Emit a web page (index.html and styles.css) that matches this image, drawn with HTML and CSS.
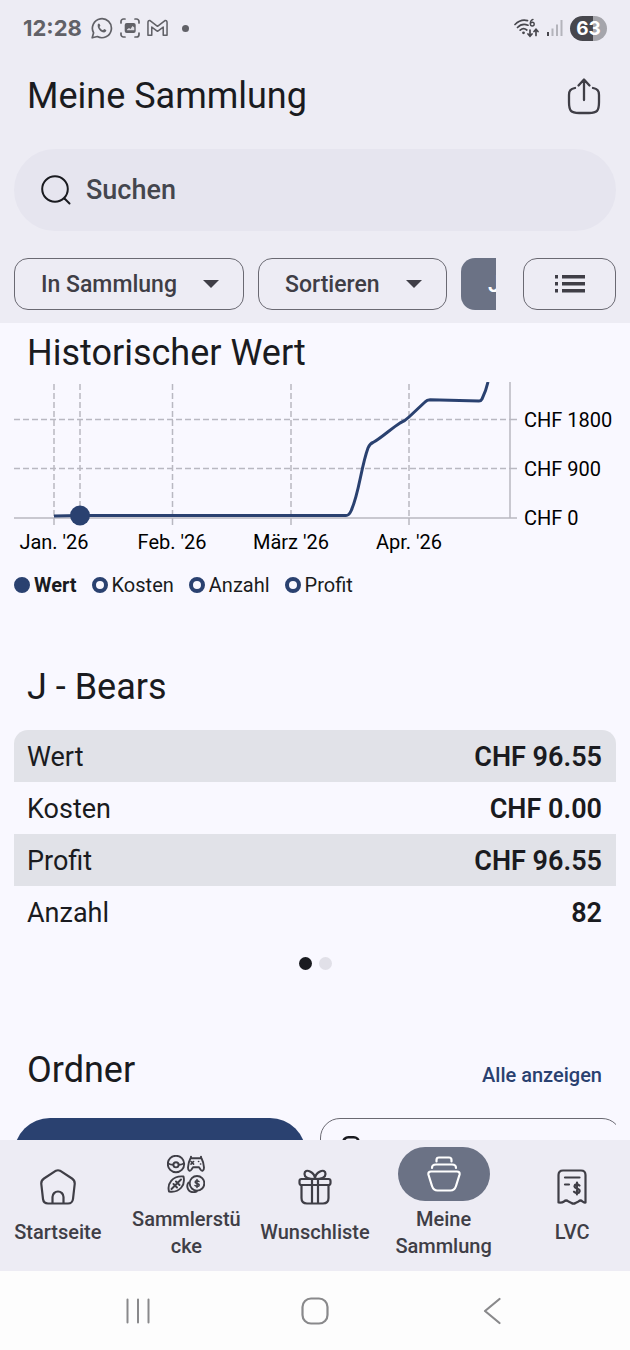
FILE: index.html
```html
<!DOCTYPE html>
<html lang="de">

<head>
    <meta charset="UTF-8">
    <meta name="viewport" content="width=device-width, initial-scale=1.0">
    <title>Meine Sammlung</title>
    <link rel="stylesheet" href="styles.css">
</head>

<body>
    <header class="top">
        <div class="status">
            <span class="time">12:28</span>
            <svg width="22" height="22" viewBox="0 0 22 22" fill="none" stroke="#616167" stroke-width="1.7">
                <path d="M1.2 20.8l1.4-5A9.5 9.5 0 1 1 6.3 19.5z" stroke-linejoin="round" />
                <path d="M6.8 7.2c.6-1 1.5-1 1.8-.3l.8 1.8-.9 1.2c.7 1.6 1.9 2.7 3.5 3.4l1.2-1.2 2 1c.4.9-.6 2.2-2 2.3-3.4.1-7.4-4.2-6.4-8.2z" fill="#616167" stroke="none" />
            </svg>
            <svg width="20" height="20" viewBox="0 0 20 20" fill="none" stroke="#616167" stroke-width="1.7" stroke-linecap="round">
                <path d="M1 5V3.500A2.500 2.500 0 0 1 3.500 1H5M15 1h1.500A2.500 2.500 0 0 1 19 3.500V5M19 15v1.500a2.500 2.500 0 0 1-2.500 2.500H15M5 19H3.500A2.500 2.500 0 0 1 1 16.500V15" />
                <rect x="4.700" y="5" width="11" height="10" rx="2" fill="#616167" stroke="none" />
                <path d="M7 12.300V11.500L9 10l1.500 1 2-3 1.800 1.500v2.800z" fill="#dddce3" stroke="none" />
            </svg>
            <svg width="21" height="18" viewBox="0 0 22 18" fill="none" stroke="#616167" stroke-width="1.6" stroke-linejoin="round">
                <path d="M1 16.500V3.200Q1 .8 3.200 1.200L11 7.200 18.800 1.200Q21 .8 21 3.200V16.500H17V8L11 12.500 5 8V16.500z" />
            </svg>
            <span class="more"></span>
            <svg class="wifi" width="26" height="20" viewBox="0 0 26 20" fill="none" stroke="#47474d" stroke-width="1.7" stroke-linecap="round">
                <path d="M2 6.500C6 2.500 10 1.300 14.500 2.600M4.500 9.500C7.500 6.300 11 5.600 15 7.200M7.200 12.200c2-1.800 4.600-1.800 6.600-.2" />
                <circle cx="10.500" cy="14.800" r="1.400" fill="#47474d" stroke="none" />
                <path d="M20 1.400c-2 .8-2.800 2.500-2.600 4.200" stroke-width="1.400" />
                <circle cx="19.300" cy="6.100" r="1.900" stroke-width="1.400" />
                <path d="M17 12v6M15 16l2 2.200 2-2.200M23 17.500v-6M21 13.500l2-2.200 2 2.200" />
            </svg>
            <svg width="17" height="18" viewBox="0 0 17 18" stroke="#b4b4bb" stroke-width="2">
                <path d="M2 17v-4" stroke="#47474d" />
                <path d="M6.500 17V9.500M11 17V5.500M15.500 17V1" />
            </svg>
            <span class="battery">63</span>
        </div>

        <div class="titlebar">
            <h1>Meine Sammlung</h1>
            <button class="share" aria-label="Teilen">
                <svg width="34" height="38" viewBox="0 0 34 38" fill="none" stroke="#3f3e46" stroke-width="2.3" stroke-linecap="round" stroke-linejoin="round">
                    <path d="M17 23V3M11.500 8.500L17 2.500l5.500 6M8 11C3.500 12 2 13.500 2 18v7c0 9 2 11 10 11h10c8 0 10-2 10-11v-7c0-4.500-1.500-6-6-7" />
                </svg>
            </button>
        </div>

        <label class="search">
            <svg width="30" height="30" viewBox="0 0 30 30" fill="none" stroke="#1a1b20" stroke-width="2" stroke-linecap="round">
                <circle cx="14" cy="14" r="12.800" />
                <path d="M23.500 23.500l5 5" />
            </svg>
            <input type="search" placeholder="Suchen" aria-label="Suchen">
        </label>

        <div class="filters">
            <div class="chips">
                <div class="chip wide">
                    <select aria-label="Status">
                        <option>In Sammlung</option>
                    </select>
                </div>
                <div class="chip">
                    <select aria-label="Sortierung">
                        <option>Sortieren</option>
                    </select>
                </div>
                <button class="chip-active">J - Bears</button>
            </div>
            <button class="list-btn" aria-label="Listenansicht">
                <svg width="30" height="18" viewBox="0 0 30 18" fill="#3f3e46">
                    <path d="M0 0h3v3.500H0zM7 0h23v3.500H7zM0 7h3v3.500H0zM7 7h23v3.500H7zM0 14h3v3.500H0zM7 14h23v3.500H7z" />
                </svg>
            </button>
        </div>
    </header>

    <main>
        <section class="history">
            <h2>Historischer Wert</h2>
            <svg class="chart" viewBox="0 0 602 176">
                <!-- grid -->
                <g stroke="#b9b8c1" stroke-width="1.5" stroke-dasharray="6 3">
                    <path d="M0 37.500H496M0 86.500H496M40 2V136M66 2V136M158.500 2V136M277 2V136M395 2V136" />
                </g>
                <!-- axes and ticks -->
                <path d="M0 136H503M496 0V136M496 37.500h7M496 86.500h7M40 136v7M158.500 136v7M277 136v7M395 136v7" stroke="#b9b8c1" stroke-width="1.5" />
                <path class="value" d="M40 134L66 133.500H332Q335 133.500 337 129C345 112 347 85 354 66Q356 61.500 359 60.500C366 57 378 46 386 41Q391 39 395 35L411 20Q413 17.800 416 17.800L465 19Q467 19 468 17Q472 9 474 0" />
                <circle cx="66" cy="133.500" r="10" fill="#2a4170" />
                <g text-anchor="middle">
                    <text x="40" y="167">Jan. '26</text>
                    <text x="158" y="167">Feb. '26</text>
                    <text x="277" y="167">März '26</text>
                    <text x="395" y="167">Apr. '26</text>
                </g>
                <text x="510" y="45">CHF 1800</text>
                <text x="510" y="94">CHF 900</text>
                <text x="510" y="143">CHF 0</text>
            </svg>
            <div class="legend">
                <label><input type="radio" name="series" checked><span>Wert</span></label>
                <label><input type="radio" name="series"><span>Kosten</span></label>
                <label><input type="radio" name="series"><span>Anzahl</span></label>
                <label><input type="radio" name="series"><span>Profit</span></label>
            </div>
        </section>

        <section class="summary">
            <h2>J - Bears</h2>
            <table>
                <tr><th scope="row">Wert</th><td>CHF 96.55</td></tr>
                <tr><th scope="row">Kosten</th><td>CHF 0.00</td></tr>
                <tr><th scope="row">Profit</th><td>CHF 96.55</td></tr>
                <tr><th scope="row">Anzahl</th><td>82</td></tr>
            </table>
            <div class="dots">
                <span class="current"></span>
                <span></span>
            </div>
        </section>

        <section class="folders">
            <div class="folders-head">
                <h2>Ordner</h2>
                <a href="#">Alle anzeigen</a>
            </div>
            <div class="cards">
                <div class="card filled"></div>
                <div class="card outlined">
                    <svg width="18" height="18" viewBox="0 0 18 18" fill="none" stroke="#1a1b20" stroke-width="2.6">
                        <rect x="1.300" y="1.300" width="15.400" height="15.400" rx="5" />
                    </svg>
                </div>
            </div>
        </section>
    </main>

    <nav class="tabs">
        <a href="#">
            <span class="icon">
                <svg width="36" height="36" viewBox="0 0 36 36" fill="none" stroke="#3f3e46" stroke-width="2.2" stroke-linejoin="round">
                    <path d="M16 1.700Q18 .8 20 1.700L32 9.500Q35 11.500 34.700 15L33 30Q32.400 34.500 28 34.500H8Q3.600 34.500 3 30L1.300 15Q1 11.500 4 9.500z" />
                    <path d="M12.500 34V28a5.500 5.500 0 0 1 11 0v6" />
                </svg>
            </span>
            <span>Startseite</span>
        </a>
        <a href="#">
            <span class="icon">
                <svg width="38" height="38" viewBox="0 0 38 38" fill="none" stroke="#3f3e46" stroke-width="1.9" stroke-linecap="round" stroke-linejoin="round">
                    <!-- ball -->
                    <circle cx="9" cy="9" r="8.200" />
                    <circle cx="9" cy="9.800" r="2.600" />
                    <path d="M1.200 8.500q2.500 1.300 5 1.300M16.800 8.500q-2.500 1.300-5 1.300" />
                    <!-- controller -->
                    <path d="M23.500 3.300h11Q36.500 7 37 12.500c0 3.800-2 4-3.500 2l-1.500-2.300h-6l-1.500 2.300c-1.500 2-3.500 1.800-3.500-2q.5-5.500 2.500-9.200zM24 3V1.600M34 3V1.600" />
                    <path d="M24 6.500l2.600 2.600M26.600 6.500L24 9.100M31.500 6.500h.2M33.500 9h.2" stroke-width="1.600" />
                    <!-- football -->
                    <path d="M2 36.500C0 29 5 20.500 16.500 21.500 18.500 30 13 38 2 36.500zM4.500 34L14 24.500M6.500 29l3.500 3.500M9 26.500L12.500 30" />
                    <!-- coins -->
                    <circle cx="30" cy="28.300" r="7.300" />
                    <path d="M21.500 27.500c-2.600 3.500-.8 9.500 4.700 9.700 1.400 0 2.600-.3 3.500-.8" />
                    <path d="M32 26.500q-2-1.500-3.500-.3c-1 1.500.5 2 1.500 2.300 1.500.5 3 1 1.800 2.500q-2 1-3.800-.5M30 24.500v8" stroke-width="1.500" />
                </svg>
            </span>
            <span>Sammlerstü<wbr>cke</span>
        </a>
        <a href="#">
            <span class="icon">
                <svg width="34" height="36" viewBox="0 0 34 36" fill="none" stroke="#3f3e46" stroke-width="2.2" stroke-linejoin="round">
                    <rect x="1.500" y="10" width="31" height="6" rx="2" />
                    <path d="M3.500 16v13c0 4 1.500 5.500 5.500 5.500h16c4 0 5.500-1.500 5.500-5.500V16M14 10v24M20 10v24" />
                    <path d="M17 10C10 10 6.500 8 6.500 5S9 .9 12 2.500C15 4 17 7 17 10zM17 10c7 0 10.500-2 10.500-5S25 .9 22 2.500C19 4 17 7 17 10z" />
                </svg>
            </span>
            <span>Wunschliste</span>
        </a>
        <a href="#" class="active">
            <span class="icon">
                <svg width="34" height="36" viewBox="0 0 34 36" fill="none" stroke="#fff" stroke-width="2.2" stroke-linecap="round" stroke-linejoin="round">
                    <path d="M9.500 5.500V4Q9.500 1.500 12 1.500h10Q24.500 1.500 24.500 4v1.500" />
                    <path d="M5 12Q5 8.500 9 8.500h16q4 0 4 3.500" />
                    <path d="M4 15.500h26q3 0 2.600 3L29 30Q27.500 34.500 23.500 34.500h-13Q6.500 34.500 5 30L1.400 18.500Q1 15.500 4 15.500z" />
                </svg>
            </span>
            <span>Meine Sammlung</span>
        </a>
        <a href="#">
            <span class="icon">
                <svg width="30" height="36" viewBox="0 0 30 36" fill="none" stroke="#3f3e46" stroke-width="2.2" stroke-linecap="round" stroke-linejoin="round">
                    <path d="M1.500 33.500V6q0-4.500 4.500-4.500h18q4.500 0 4.500 4.500v27.500q-1.500.5-3-1-2-2-4 0l-3 1.500q-2 1.300-4 0l-3-1.500q-2.500-2-4.500 0-2 1.500-5.500 1z" />
                    <path d="M8 8.500h14.500M8 15.500h4" />
                    <path d="M22.500 16.500q-2.500-2-4.500-.5c-1.500 2 .5 3 2 3.500 2.500.8 3.500 2 2 4q-2.500 1.500-5-.8M20 13.500v12" />
                </svg>
            </span>
            <span>LVC</span>
        </a>
    </nav>

    <div class="system">
        <button aria-label="Letzte Apps">
            <svg width="26" height="26" viewBox="0 0 26 26" stroke="#89898b" stroke-width="2" stroke-linecap="round">
                <path d="M2.500 1.500v23M13 1.500v23M23.500 1.500v23" />
            </svg>
        </button>
        <button aria-label="Startbildschirm">
            <svg width="28" height="28" viewBox="0 0 28 28" fill="none" stroke="#89898b" stroke-width="2.2">
                <rect x="1.500" y="1.500" width="25" height="25" rx="8.500" />
            </svg>
        </button>
        <button aria-label="Zurück">
            <svg width="18" height="28" viewBox="0 0 18 28" fill="none" stroke="#89898b" stroke-width="2.2" stroke-linecap="round" stroke-linejoin="round">
                <path d="M16.500 2L2 14l14.500 12" />
            </svg>
        </button>
    </div>
</body>

</html>
```

FILE: styles.css
```css
* {
    box-sizing: border-box;
}

body {
    margin: 0;
    height: 100vh;
    display: flex;
    flex-direction: column;
    background-color: #f9f8ff;
    color: #1a1b20;
    font-family: Roboto, sans-serif;
    overflow: hidden;
}

button {
    padding: 0;
    border: none;
    background: none;
    font-family: inherit;
    cursor: pointer;
}

a {
    text-decoration: none;
}

svg {
    display: block;
    flex: none;
}

h1,
h2 {
    margin: 0;
    font-size: 36px;
    line-height: 44px;
    font-weight: 400;
}

/* header */
.top {
    flex: none;
    padding: 0 14px 13px;
    background-color: #edecf4;
}

.status {
    height: 56px;
    padding: 0 9px;
    display: flex;
    align-items: center;
    gap: 7px;
}

.time {
    margin-right: 2px;
    font-family: Inter, sans-serif;
    font-size: 22px;
    font-weight: 700;
    color: #616167;
}

.more {
    width: 7px;
    height: 7px;
    margin-left: 7px;
    border-radius: 50%;
    background-color: #616167;
}

.wifi {
    margin-left: auto;
}

.battery {
    width: 37px;
    height: 25px;
    border-radius: 13px;
    background: linear-gradient(to right, #47474d 62%, #a5a5ab 62%);
    color: #fff;
    font-family: Inter, sans-serif;
    font-size: 19px;
    line-height: 25px;
    font-weight: 700;
    text-align: center;
}

.titlebar {
    height: 80px;
    padding: 0 15px 0 13px;
    display: flex;
    align-items: center;
    justify-content: space-between;
}

.search {
    height: 82px;
    margin-top: 13px;
    padding: 0 27px;
    display: flex;
    align-items: center;
    gap: 15px;
    border-radius: 41px;
    background-color: #e6e5ef;
}

.search input {
    flex: 1;
    min-width: 0;
    padding: 0;
    border: none;
    outline: none;
    background: none;
    font-family: inherit;
    font-size: 27px;
    font-weight: 500;
    color: #3f3e46;
}

.search input::placeholder {
    color: #44464e;
    opacity: 1;
}

.filters {
    margin-top: 27px;
    display: flex;
    gap: 27px;
}

.chips {
    flex: 1;
    min-width: 0;
    display: flex;
    gap: 14px;
    overflow: hidden;
}

.chip {
    position: relative;
    flex: none;
    width: 189px;
}

.chip.wide {
    width: 230px;
}

.chip select {
    width: 100%;
    height: 52px;
    padding: 0 26px;
    border: 1px solid #6a6972;
    border-radius: 14px;
    appearance: none;
    background: none;
    font-family: inherit;
    font-size: 23px;
    font-weight: 500;
    color: #3f3e46;
}

.chip::after {
    content: "";
    position: absolute;
    top: 22px;
    right: 25px;
    border: 8px solid transparent;
    border-top-color: #3f3e46;
    border-bottom: none;
    pointer-events: none;
}

.chip-active {
    flex: none;
    height: 52px;
    padding: 0 27px;
    border-radius: 14px;
    background-color: #6b7285;
    color: #fff;
    font-size: 23px;
    font-weight: 500;
}

.list-btn {
    width: 93px;
    height: 52px;
    display: flex;
    align-items: center;
    justify-content: center;
    border: 1px solid #6a6972;
    border-radius: 14px;
}

/* content */
main {
    flex: 1;
    min-height: 0;
    padding: 8px 14px 0;
    overflow: hidden;
}

main h2 {
    padding: 0 13px;
}

.chart {
    width: 100%;
    margin-top: 7px;
    font-size: 20px;
}

.chart .value {
    fill: none;
    stroke: #2a4170;
    stroke-width: 3;
}

.legend {
    margin-top: 15px;
    display: flex;
    gap: 15px;
    font-size: 20px;
    line-height: 24px;
}

.legend label {
    display: flex;
    align-items: center;
    gap: 4px;
}

.legend input {
    appearance: none;
    width: 16px;
    height: 16px;
    margin: 0;
    border: 4px solid #2a4170;
    border-radius: 50%;
}

.legend input:checked {
    background-color: #2a4170;
}

.legend input:checked + span {
    font-weight: 700;
}

.summary {
    margin-top: 68px;
}

table {
    width: 100%;
    margin-top: 21px;
    border-collapse: collapse;
    font-size: 27px;
}

tr {
    height: 52px;
}

th,
td {
    padding: 2px 14px 0 13px;
}

th {
    font-weight: 400;
    text-align: left;
}

td {
    font-weight: 600;
    text-align: right;
}

tr:nth-child(odd) > * {
    background-color: #e1e2e8;
}

tr:first-child th {
    border-top-left-radius: 14px;
}

tr:first-child td {
    border-top-right-radius: 14px;
}

.dots {
    margin-top: 19px;
    display: flex;
    justify-content: center;
    gap: 7px;
}

.dots span {
    width: 13px;
    height: 13px;
    border-radius: 50%;
    background-color: #e1e0e8;
}

.dots .current {
    background-color: #1a1b20;
}

.folders {
    margin-top: 78px;
}

.folders-head {
    display: flex;
    align-items: center;
    justify-content: space-between;
}

.folders-head a {
    padding: 10px 14px 0;
    font-size: 20px;
    font-weight: 500;
    color: #2a4170;
}

.cards {
    margin-top: 26px;
    display: flex;
    gap: 14px;
    overflow: hidden;
}

.card {
    flex: none;
    width: 292px;
    height: 160px;
}

.filled {
    border-radius: 36px;
    background-color: #2a4170;
}

.outlined {
    width: 302px;
    padding: 17px 21px;
    border: 1px solid #6a6972;
    border-radius: 20px;
}

/* bottom bars */
.tabs {
    flex: none;
    height: 131px;
    padding-bottom: 5px;
    display: grid;
    grid-template-columns: repeat(5, 1fr);
    gap: 13px;
    align-items: center;
    background-color: #edecf4;
}

.tabs a {
    min-width: 0;
    display: flex;
    flex-direction: column;
    align-items: center;
    gap: 5px;
    color: #3f3e46;
    font-size: 20px;
    line-height: 27px;
    font-weight: 500;
    text-align: center;
}

.icon {
    width: 92px;
    height: 54px;
    display: flex;
    align-items: center;
    justify-content: center;
    border-radius: 27px;
}

.active .icon {
    background-color: #6b7285;
}

.system {
    flex: none;
    height: 79px;
    padding: 0 50px;
    display: grid;
    grid-template-columns: repeat(3, 1fr);
    background-color: #fdfdfd;
}

.system button {
    display: flex;
    align-items: center;
    justify-content: center;
}
```
